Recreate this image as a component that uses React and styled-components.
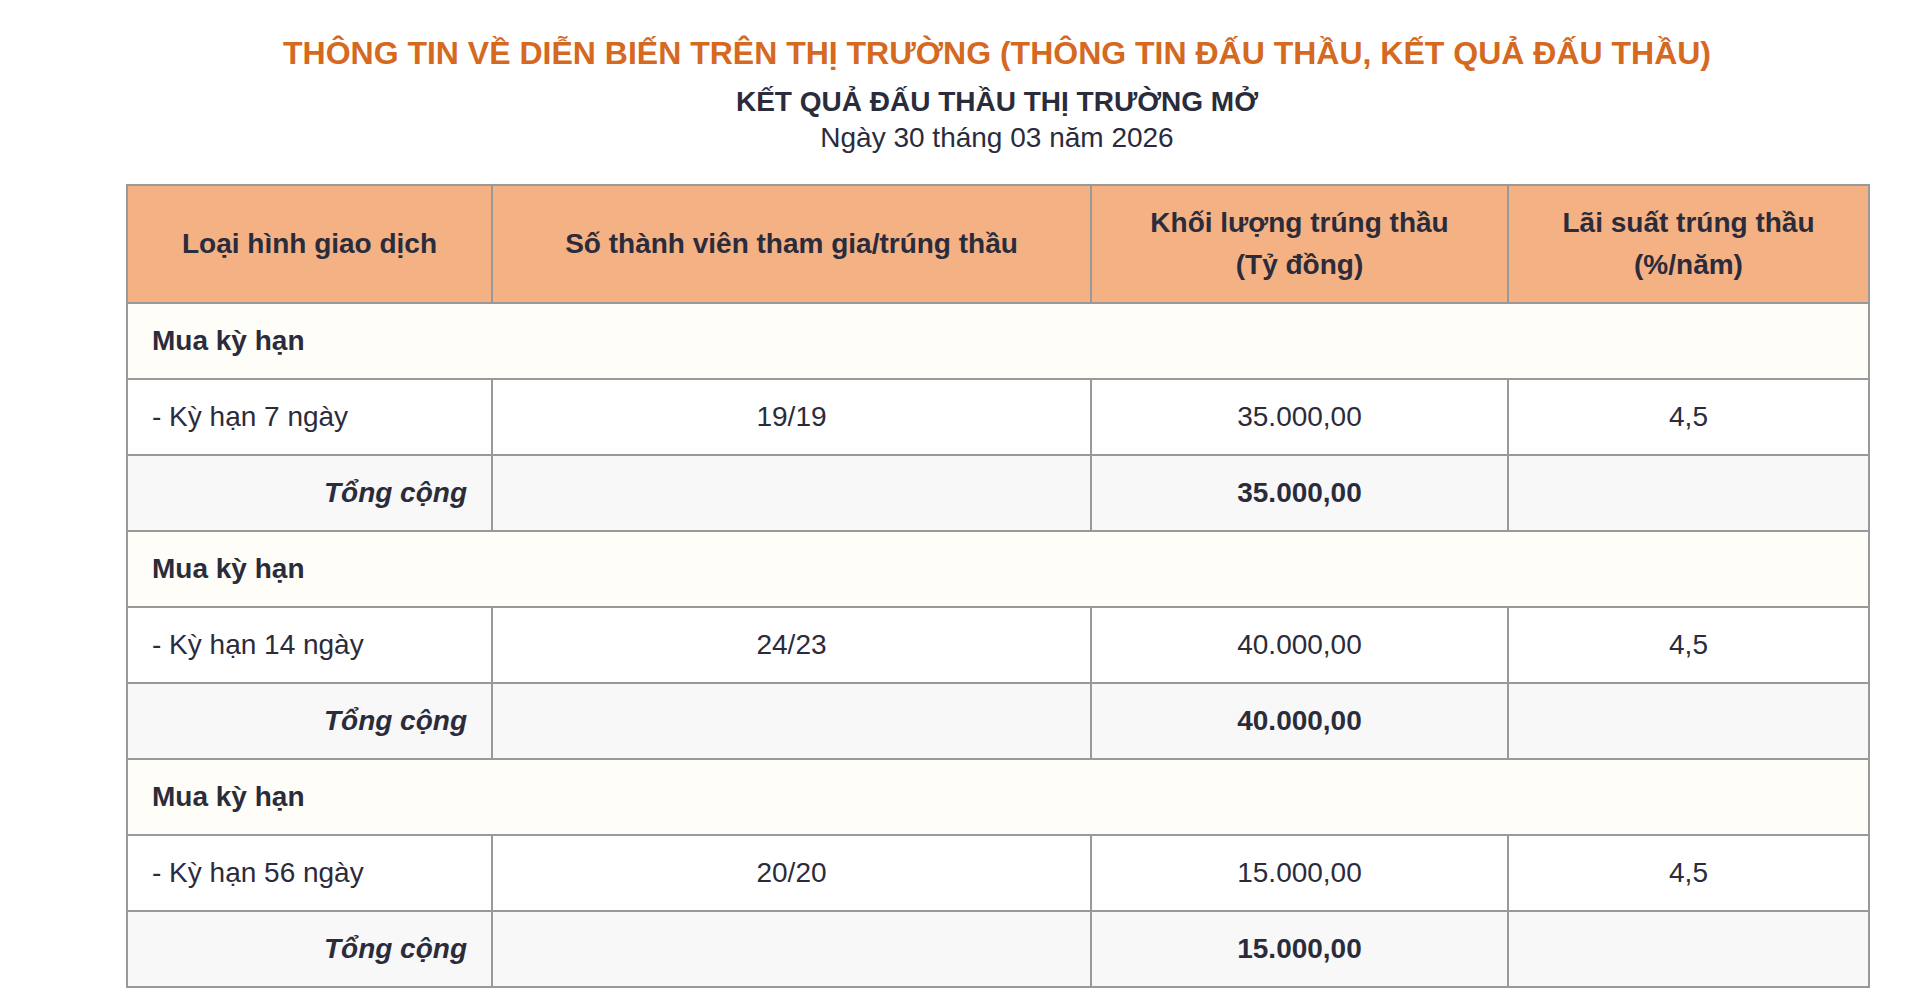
import React from "react";
import styled, { createGlobalStyle } from "styled-components";

const GlobalStyle = createGlobalStyle`
  html, body {
    margin: 0;
    padding: 0;
    background: #ffffff;
  }
  body {
    font-family: "Liberation Sans", Arial, Helvetica, sans-serif;
    color: #2b2c3b;
  }
`;

const groups = [
  { term: "- Kỳ hạn 7 ngày", members: "19/19", volume: "35.000,00", rate: "4,5" },
  { term: "- Kỳ hạn 14 ngày", members: "24/23", volume: "40.000,00", rate: "4,5" },
  { term: "- Kỳ hạn 56 ngày", members: "20/20", volume: "15.000,00", rate: "4,5" },
];

export default function App() {
  return (
    <Page>
      <GlobalStyle />
      <Heading>
        <h1>THÔNG TIN VỀ DIỄN BIẾN TRÊN THỊ TRƯỜNG (THÔNG TIN ĐẤU THẦU, KẾT QUẢ ĐẤU THẦU)</h1>
        <h2>KẾT QUẢ ĐẤU THẦU THỊ TRƯỜNG MỞ</h2>
        <p>Ngày 30 tháng 03 năm 2026</p>
      </Heading>
      <Table>
        <colgroup>
          <col style={{ width: 365 }} />
          <col style={{ width: 599 }} />
          <col style={{ width: 417 }} />
          <col style={{ width: 361 }} />
        </colgroup>
        <thead>
          <tr>
            <HeadCell>Loại hình giao dịch</HeadCell>
            <HeadCell>Số thành viên tham gia/trúng thầu</HeadCell>
            <HeadCell>
              Khối lượng trúng thầu
              <br />
              (Tỷ đồng)
            </HeadCell>
            <HeadCell>
              Lãi suất trúng thầu
              <br />
              (%/năm)
            </HeadCell>
          </tr>
        </thead>
        <tbody>
          {groups.map((g) => (
            <React.Fragment key={g.term}>
              <Row $tone="section">
                <Cell colSpan={4} $bold>
                  Mua kỳ hạn
                </Cell>
              </Row>
              <Row>
                <Cell>{g.term}</Cell>
                <Cell $center>{g.members}</Cell>
                <Cell $center>{g.volume}</Cell>
                <Cell $center>{g.rate}</Cell>
              </Row>
              <Row $tone="total">
                <Cell $right $bold $italic>
                  Tổng cộng
                </Cell>
                <Cell />
                <Cell $center $bold>
                  {g.volume}
                </Cell>
                <Cell />
              </Row>
            </React.Fragment>
          ))}
        </tbody>
      </Table>
    </Page>
  );
}

const Page = styled.main`
  padding: 33px 38px 20px 126px;
`;

const Heading = styled.header`
  text-align: center;
  margin-bottom: 28px;
  h1 {
    margin: 0;
    font-size: 32px;
    line-height: 40px;
    font-weight: 700;
    color: #d4691f;
  }
  h2 {
    margin: 11px 0 0;
    font-size: 28px;
    line-height: 36px;
    font-weight: 700;
    color: #2b2c3b;
  }
  p {
    margin: 0;
    font-size: 28px;
    line-height: 36px;
    color: #2b2c3b;
  }
`;

const Table = styled.table`
  width: 100%;
  border-collapse: collapse;
  table-layout: fixed;
  border: 2px solid #999999;
  font-size: 28px;
`;

const HeadCell = styled.th`
  height: 116px;
  padding: 0 20px;
  background: #f4b184;
  border: 2px solid #999999;
  font-weight: 700;
  line-height: 42px;
  text-align: center;
  vertical-align: middle;
  color: #2b2c3b;
`;

const Row = styled.tr`
  background: ${(p) =>
    p.$tone === "section" ? "#fffdf7" : p.$tone === "total" ? "#f8f8f8" : "#ffffff"};
`;

const Cell = styled.td`
  height: 74px;
  padding: 0 24px;
  border: 2px solid #999999;
  vertical-align: middle;
  text-align: ${(p) => (p.$center ? "center" : p.$right ? "right" : "left")};
  font-weight: ${(p) => (p.$bold ? 700 : 400)};
  font-style: ${(p) => (p.$italic ? "italic" : "normal")};
  color: #2b2c3b;
`;
